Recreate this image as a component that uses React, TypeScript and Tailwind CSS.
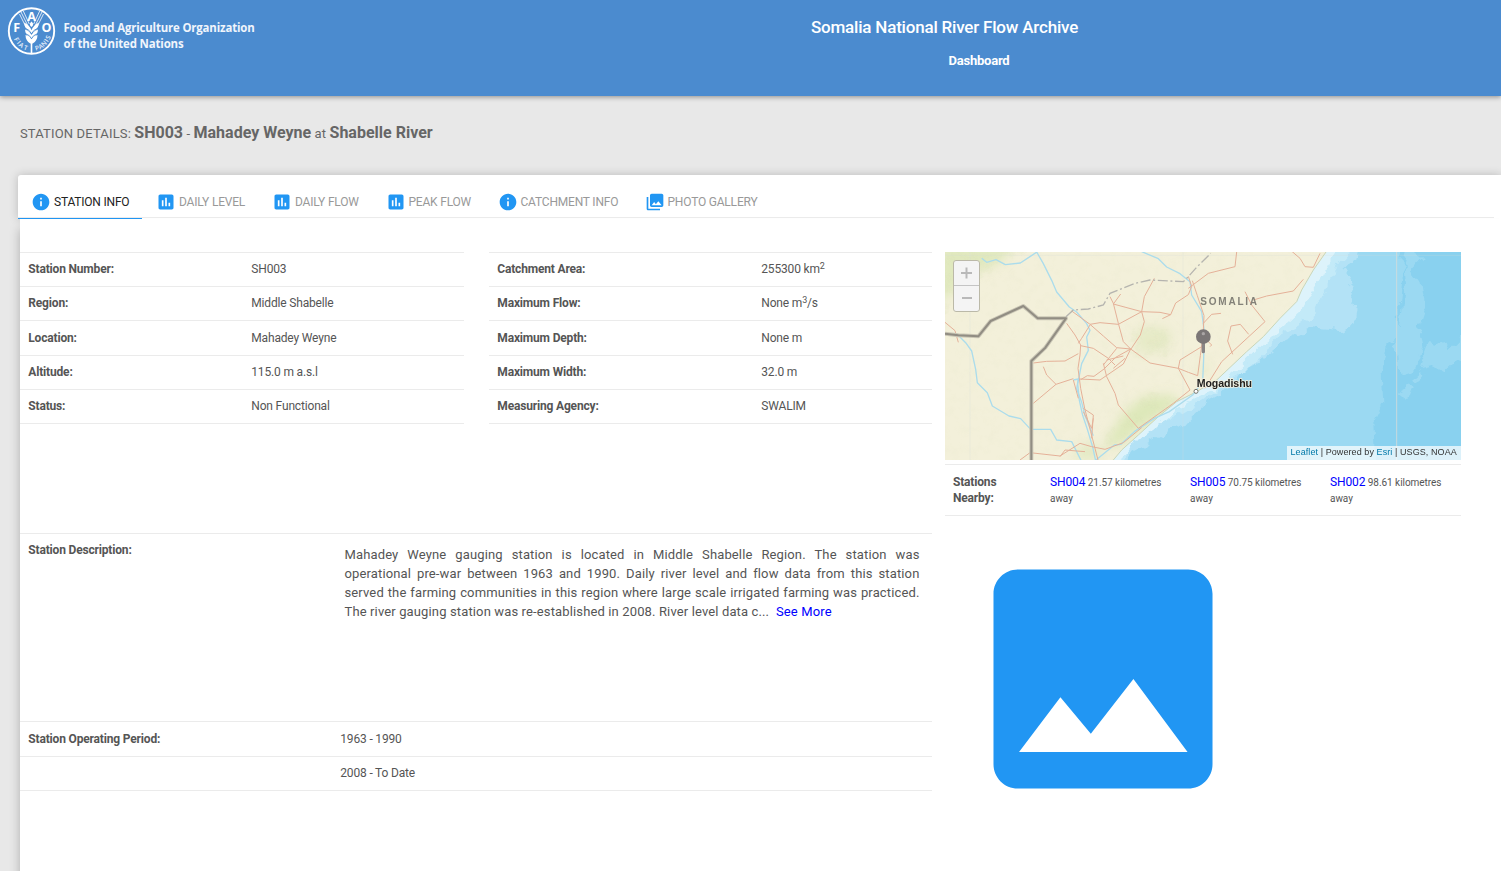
import React from "react";
import { MdInfo, MdInsertChart, MdPhotoLibrary } from "react-icons/md";

const tabs = [
  { label: "STATION INFO", icon: MdInfo, size: "w-[125px]", active: true },
  { label: "DAILY LEVEL", icon: MdInsertChart, size: "w-[116px]" },
  { label: "DAILY FLOW", icon: MdInsertChart, size: "w-[113.5px]" },
  { label: "PEAK FLOW", icon: MdInsertChart, size: "w-[112px]" },
  { label: "CATCHMENT INFO", icon: MdInfo, size: "w-[147px]" },
  { label: "PHOTO GALLERY", icon: MdPhotoLibrary, size: "w-[140px]" },
];

const general: [string, React.ReactNode][] = [
  ["Station Number:", "SH003"],
  ["Region:", "Middle Shabelle"],
  ["Location:", "Mahadey Weyne"],
  ["Altitude:", "115.0 m a.s.l"],
  ["Status:", "Non Functional"],
];

const Sup = ({ children }: { children: React.ReactNode }) => (
  <sup className="text-[9px]">{children}</sup>
);

const measures: [string, React.ReactNode][] = [
  ["Catchment Area:", <>255300 km<Sup>2</Sup></>],
  ["Maximum Flow:", <>None m<Sup>3</Sup>/s</>],
  ["Maximum Depth:", "None m"],
  ["Maximum Width:", "32.0 m"],
  ["Measuring Agency:", "SWALIM"],
];

const nearby = [
  ["SH004", "21.57"],
  ["SH005", "70.75"],
  ["SH002", "98.61"],
];

function Logo() {
  return (
    <svg className="block h-[56px] w-[300px]" viewBox="0 0 300 56" fill="none">
      <circle cx="31.5" cy="31" r="22.7" stroke="#fff" strokeWidth="1.9" />
      <g fill="#fff" fontFamily="Open Sans, sans-serif" fontWeight="700" textAnchor="middle">
        <text x="31.5" y="21" fontSize="12.5">A</text>
        <text x="16.7" y="32" fontSize="12.5">F</text>
        <text x="46.3" y="32" fontSize="12.5">O</text>
      </g>
      <g fill="#e6eefa" fontFamily="Open Sans, sans-serif" fontWeight="600" fontSize="6.5" textAnchor="middle">
        <text transform="translate(14.6 40.4) rotate(62)">F</text>
        <text transform="translate(17 44) rotate(48)">I</text>
        <text transform="translate(20 47) rotate(36)">A</text>
        <text transform="translate(25 49.7) rotate(18)">T</text>
        <text transform="translate(37.5 50.3) rotate(-16)">P</text>
        <text transform="translate(41.7 48.4) rotate(-30)">A</text>
        <text transform="translate(45.6 45.2) rotate(-44)">N</text>
        <text transform="translate(48.3 41.8) rotate(-56)">I</text>
        <text transform="translate(50.2 38.4) rotate(-66)">S</text>
      </g>
      <g stroke="#fff" strokeWidth="0.8">
        <path d="M21 12l7.5 15M23.3 11l6 13M19.5 14l7 14M42 12l-7.5 15M39.7 11l-6 13M43.5 14l-7 14" />
      </g>
      <path d="M31.5 21.5q-3.4 2.8 0 5.6q3.4-2.8 0-5.6z" fill="#fff" />
      <g fill="#fff">
        <path d="M24 22.5q6 3 7.5 7.8q1.5-4.8 7.5-7.8q-.7 7.5-7.5 10.5q-6.8-3-7.5-10.5z" />
        <path d="M25 29.5q5 1.5 6.5 5.5q1.5-4 6.5-5.5q0 6-6.5 8.8q-6.5-2.8-6.5-8.8z" />
        <path d="M25.5 35q4.7 1 6 4.3q1.3-3.3 6-4.3q0 5.5-4.8 8.6h-2.4q-4.8-3.1-4.8-8.6z" />
        <path d="M30.7 42h1.6v11h-1.6z" />
      </g>
      <g stroke="#4b8bcf" strokeWidth="0.9">
        <path d="M25 28q5 2 6.5 6q1.5-4 6.5-6M25.5 33.7q4.6 1.5 6 5q1.4-3.5 6-5" />
      </g>
      <g fill="#f0f5fc" fontFamily="Open Sans, sans-serif" fontWeight="700" fontSize="12.5">
        <text x="63.5" y="32.3" textLength="191" lengthAdjust="spacingAndGlyphs">Food and Agriculture Organization</text>
        <text x="63.5" y="47.5" textLength="120" lengthAdjust="spacingAndGlyphs">of the United Nations</text>
      </g>
    </svg>
  );
}

function StationMap() {
  return (
    <div className="relative h-[208px] w-[516px] overflow-hidden">
      <svg className="block h-[208px] w-[516px]" viewBox="15 21 1548 624" fill="none">
        <defs>
          <filter id="soft" x="-20%" y="-20%" width="140%" height="140%">
            <feGaussianBlur stdDeviation="16" />
          </filter>
          <filter id="wavy" filterUnits="userSpaceOnUse" x="-40" y="-40" width="1700" height="760">
            <feTurbulence type="fractalNoise" baseFrequency="0.025" numOctaves="3" seed="4" />
            <feDisplacementMap in="SourceGraphic" scale="42" xChannelSelector="R" yChannelSelector="G" />
          </filter>
          <filter id="relief" x="0" y="0" width="100%" height="100%">
            <feTurbulence type="fractalNoise" baseFrequency="0.035" numOctaves="4" seed="7" />
            <feColorMatrix values="0 0 0 0 0.72  0 0 0 0 0.77  0 0 0 0 0.5  1.7 0 0 0 -0.78" />
          </filter>
          <clipPath id="green">
            <path d="M15 21h250l-90 50l-55 30l-60 70l-45 40zM580 250l90-5l40 30l-30 60l-90 5l-30-30zM480 590l90-100l60-50l80 10l20 20l-120 80l-130 70z" />
          </clipPath>
        </defs>
        <path fill="#f3f0da" d="M15 21h1548v624H15z" />
        <g fill="#d9e6b4" filter="url(#soft)">
          <path opacity=".75" d="M0 0h230l-60 60l-70 20l-60 60l-50 40z" />
          <path opacity=".5" d="M590 250l80-5l30 30l-30 45l-80 5z" />
          <path opacity=".85" d="M490 605l60-100l60-50l80-5l30 20l-100 70l-90 65z" />
          <path opacity=".6" d="M400 620l60-30l30 55h-80zM780 360l20-10v40h-20z" />
        </g>
        <path fill="#fff" filter="url(#relief)" opacity=".1" d="M15 21h1148v624H15z" />
        <path fill="#fff" filter="url(#relief)" clipPath="url(#green)" opacity=".45" d="M15 21h760v624H15z" />

        <path fill="#ddf3fb" d="M1160 21l-40 54l-35 60l-15 35l-50 50l-50 55l-50 45l-90 85l-60 35l-60 30l-55 45l-60 55l-50 45l-25 30H1563V21z" />
        <g filter="url(#wavy)">
          <path fill="#c3eaf8" d="M1195 -20v41l-45 70l-42 60l-20 40l-60 55l-70 60l-80 80l-60 50l-80 38l-60 55l-70 60l-78 56v60H1660V-20z" />
          <path fill="#b3e2f6" d="M1225 -20v41l-20 22l-25 45l-30 65l-20 45l-50 38l-70 38l-40 52l-60 52l-70 50l-50 40l-60 35l-80 40l-70 60l-60 82v60H1660V-20z" />
          <path fill="#9bd9f2" d="M1270 -20l-15 60l-40 30l25 40l-20 40l30 40l-5 40l-50 28l-80-8l-80 38l-60 50l-60 30l-40 60l-70 40l-60 60l-90 50l-75 39l-35 60v60H1660V-20z" />
          <path fill="#89d1ef" d="M1385 -20v120l-10 100l5 70l-40 40l-15 80l5 80l-30 60l5 115v80H1660V-20z" />
          <path fill="#9bd9f2" d="M1410 -20l35 60l-30 35l30 40l10 70l-20 60l15 60l-25 70l-50 15l-5-90l15-90l10-90l-5-60zM1445 340l20-55l35 10l25 20l50-50l60-20v60l-90 45l-35 30l-35-20l-35 10zM1421 400l20-18l12 15l-18 16zM1370 440l50-25l10 22l-45 28z" />
        </g>
        <g stroke="#d6dcd8" strokeWidth="2" opacity=".8">
          <path d="M90 21v624M729 21v624M15 31h1548" strokeOpacity=".5" />
          <path d="M1370 21v624" strokeWidth="3" />
        </g>
        <path stroke="#c8d5b9" strokeWidth="3" d="M1158 21l-38 54l-35 60l-15 35l-50 50l-50 55l-50 45l-90 85l-60 35l-60 30l-55 45l-60 55l-50 45l-25 30" />

        <g stroke="#abdcec" strokeWidth="4" strokeLinejoin="round">
          <path d="M125 40l15 12l28-8l28 15l45-5l30-20l20-13M290 21l20 35l25 50l15 35l38 45l22 15l30 35l10 20l-10 20l5 40l-20 40l-12 60l5 50l10 45l15 45l15 50l12 55l10 40" />
          <path d="M57 273l20 20l18 25l12 55l5 40l30 30l15 40l50 30l35 8l30 32h60l18 32l45 5l30 60" />
          <path d="M605 20l50 21l25 25l40 20l30 24l5 40l30 50l8 60l-2 80l-3 70l-30 40l-70 50l-45 20l-60 40l-40 38l-20 2l-55 45l-30 35" />
          <path d="M400 405l15-3l-5 30l15 40l10 40l25 60" />
        </g>
        <g stroke="#e4b098" strokeWidth="3" strokeLinejoin="round">
          <path d="M15 232l30 25l10 35M380 235l25 35l17 30l-2 30l-6 40l8 60l12 60l18 70l22 85M395 198l55 40l40 35l40 35l42 4l-45 25l-35 35l-30 22l-20-2l-20 12M450 238l30-5l55 5l70-38l8-45l30-55M605 200l8 30l-12 40l-28 42M450 240l-25 40l-10 15" />
          <path d="M510 155l10 20l15 60l15 55l22 22M520 177l22-30M520 177l85 23l55 2l32 7l15-35l38-25l10-25l-10-30M692 209l-25 12" />
          <path d="M422 302l38 8l45 30l20 20M572 312l58 42l85 16l30 12l28 10l8-60l8-60l3-60l-20-60l-15-45M715 370l35 65M530 310l-40 50M500 345l50-12M520 370l35-30M420 402l60 3l70-48l22-45" />
          <path d="M490 355l10 40l25 50l10 35l60 70M750 435l-50 40l-105 75M715 370l5-25l65-40" />
          <path d="M280 354l40-5l55-1l40-22M310 365l10 25l28 28l52-17M280 475l68-57M240 645l30-22l90 10l60-38l35 10l40 8l55-20l55-45M360 635l15-20l60 5M400 405l15 55M430 490l30 20l-5 70M430 500l25 50l5-30" />
          <path d="M745 130l60-45l80-20l5-44M1045 10l35 30l15 25l25 2l20-42M790 235l25-27l28-3M915 140l20 40l40 50l-130 120l-50 80M940 165l40-12l80-15l30-35M878 328l-15-40l10-45l28-5l25 30M810 305l5-5l-20-20" />
        </g>
        <g stroke="#918d83" strokeWidth="6" strokeLinejoin="round">
          <path stroke="#cbc7b6" strokeWidth="12" d="M15 266l40 5l60 3l37-46l98-45l43 37h85l-62 88l-42 40v297" />
          <path d="M15 266l40 5l60 3l37-46l98-45l43 37h85l-62 88l-42 40v297" />
        </g>
        <path stroke="#b5b4af" strokeWidth="4" strokeDasharray="30 8 6 8" d="M378 215l22-20l45-3l45-12l20-35l75-30l45-10l100 5l15-15l22-25l45-45" />
        <g fontFamily="Liberation Sans, sans-serif" fontWeight="700">
          <text x="781" y="180" fontSize="30" fill="#838178" textLength="170">SOMALIA</text>
          <circle cx="768" cy="439" r="6" fill="#fff" stroke="#77766d" strokeWidth="3" />
          <text x="770" y="427" fontSize="30" fill="#222" stroke="#f6f2df" strokeWidth="4" paintOrder="stroke" textLength="166" lengthAdjust="spacingAndGlyphs">Mogadishu</text>
        </g>
        <path stroke="#8a8585" strokeWidth="10" strokeLinecap="round" d="M790 285v35" />
        <circle cx="790" cy="275" r="22" fill="#7b7676" />
        <circle cx="790" cy="266" r="5" fill="#aaa5a5" />
      </svg>
      <div className="absolute left-2 top-2 h-[52px] w-[27px] rounded-[3px] border border-[#bbb9a8] bg-[#f4f4f4] text-[#b9b9b9]">
        <svg className="block h-[50px] w-[25px]" viewBox="0 0 25 50" fill="none" stroke="currentColor">
          <path d="M7 12h11M12.5 6.5v11M8 37h10" strokeWidth="2" />
          <path d="M0 24.5h25" strokeWidth="1" stroke="#c4c4c4" />
        </svg>
      </div>
      <div className="absolute bottom-0 right-0 h-[14px] w-[174px] whitespace-nowrap bg-white/70 pl-[3.5px] font-['Liberation_Sans',sans-serif] text-[9px] leading-[13px] tracking-[0.08px] text-[#333]">
        <span className="text-[#0078a8]">Leaflet</span> | Powered by <span className="text-[#0078a8]">Esri</span> | USGS, NOAA
      </div>
    </div>
  );
}

function DataTable({ rows, className, labelClass }: { rows: [string, React.ReactNode][]; className: string; labelClass: string }) {
  return (
    <dl className={`h-[172px] border-b border-[#ebebeb] ${className}`}>
      {rows.map(([label, value]) => (
        <div key={label} className="flex h-[34.2px] border-t border-[#ebebeb] pl-[8.3px] pt-[8.2px] leading-4">
          <dt className={`font-bold ${labelClass}`}>{label}</dt>
          <dd>{value}</dd>
        </div>
      ))}
    </dl>
  );
}

export default function App() {
  return (
    <div className="flex h-[871px] w-full flex-col overflow-hidden bg-[#e8e8e8] font-[Roboto,sans-serif] text-xs tracking-[-0.17px] text-[#555]">
      <header className="flex h-24 shrink-0 bg-[#4b8bcf] text-white shadow-[0_1px_5px_rgba(0,0,0,0.4)]">
        <div className="w-[388px]"><Logo /></div>
        <div className="flex w-[1113px] flex-col items-center">
          <h1 className="mt-[17px] text-[17px] font-medium leading-5 tracking-[-0.2px]">Somalia National River Flow Archive</h1>
          <nav className="mt-4 pl-[69px] text-[13px] font-bold leading-4 tracking-[-0.22px]">Dashboard</nav>
        </div>
      </header>
      <h2 className="h-[79px] shrink-0 pl-5 pt-[27px] text-[13px] leading-5 tracking-[0.15px] text-[#666]">
        STATION DETAILS: <b className="text-base leading-5 tracking-normal">SH003</b> - <b className="text-base leading-5 tracking-normal">Mahadey Weyne</b> at <b className="text-base leading-5 tracking-normal">Shabelle River</b>
      </h2>
      <main className="flex min-h-0 grow flex-col">
        <div className="ml-[18px] h-11 shrink-0 rounded-tl-[3px] bg-white shadow-[0_0_10px_rgba(0,0,0,0.2)]">
          <nav className="mr-[7px] flex h-[43px] border-b border-[#ebebeb]">
            {tabs.map(({ label, icon: Icon, size, active }) => (
              <div key={label} className={`relative flex h-11 shrink-0 items-center whitespace-nowrap pl-[13px] pt-[10px] tracking-[-0.2px] ${size} ${active ? "text-[#222]" : "text-[#999]"}`}>
                <Icon className="mr-[3px] size-5 shrink-0 text-[#2196f3]" />
                {label}
                {active && <span className="absolute bottom-0 left-0 h-px w-[124px] bg-[#2196f3]" />}
              </div>
            ))}
          </nav>
        </div>
        <div className="relative ml-5 flex min-h-0 grow bg-white pt-[33px] shadow-[0_10px_10px_rgba(0,0,0,0.25)]">
          <section className="w-[912px]">
            <div className="flex gap-[25px]">
              <DataTable rows={general} className="w-[444px]" labelClass="w-[223px]" />
              <DataTable rows={measures} className="w-[443px]" labelClass="w-[264px]" />
            </div>
            <div className="mt-[109px] flex h-[188px] border-t border-[#ebebeb] pl-[8.3px] pt-2">
              <div className="w-[316.2px] font-bold leading-4">Station Description:</div>
              <p className="mt-[3px] w-[575px] text-justify text-[13px] leading-[19px] tracking-[0.135px]">
                Mahadey Weyne gauging station is located in Middle Shabelle Region. The station was operational pre-war between 1963 and 1990. Daily river level and flow data from this station served the farming communities in this region where large scale irrigated farming was practiced. The river gauging station was re-established in 2008. River level data c...&nbsp; <a className="text-[#00f]">See More</a>
              </p>
            </div>
            <div className="flex h-[35px] border-t border-[#ebebeb] pl-[8.3px] pt-[9px] leading-4">
              <span className="w-[312px] font-bold">Station Operating Period:</span>
              <span>1963 - 1990</span>
            </div>
            <div className="h-[35px] border-y border-[#ebebeb] pl-[320.3px] pt-2 leading-4">2008 - To Date</div>
          </section>
          <aside className="ml-[13px] w-[516px]">
            <StationMap />
            <div className="mt-1 flex h-[52px] border-y border-[#ebebeb] pl-2 pt-[9px] leading-4">
              <div className="w-[97px] shrink-0 pr-[30px] font-bold">Stations Nearby:</div>
              {nearby.map(([id, distance]) => (
                <div key={id} className="w-[140px] shrink-0 pr-6 text-[10px] tracking-[-0.04px] last:w-[131px] last:pr-[15px]">
                  <a className="text-xs tracking-[-0.13px] text-[#00f]">{id}</a> {distance} kilometres away
                </div>
              ))}
            </div>
            <svg className="ml-12 mt-[52.5px] block size-[220px]" viewBox="2.96 2.96 18.08 18.08" fill="#2196f3">
              <path d="M21 19V5c0-1.1-.9-2-2-2H5c-1.1 0-2 .9-2 2v14c0 1.1.9 2 2 2h14c1.1 0 2-.9 2-2zM8.5 13.5l2.5 3L14.5 12l4.45 6H5.1l3.4-4.5z" />
            </svg>
          </aside>
        </div>
      </main>
    </div>
  );
}
